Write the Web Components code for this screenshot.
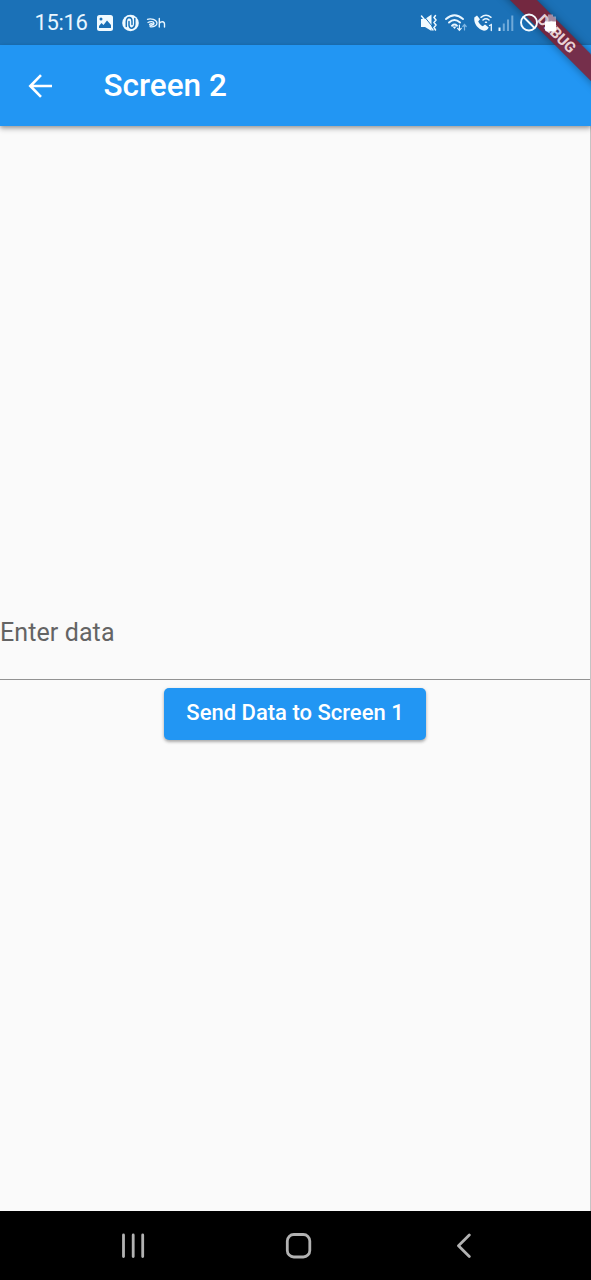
<!DOCTYPE html>
<html lang="en">
<head>
<meta charset="utf-8">
<title>Screen 2</title>
<style>
html,body{margin:0;height:100%;overflow:hidden}
</style>
</head>
<body>
<phone-screen></phone-screen>
<script>
const define = (name, markup) => {
  const t = document.createElement('template');
  t.innerHTML = markup;
  customElements.define(name, class extends HTMLElement {
    constructor() {
      super();
      this.attachShadow({mode: 'open'}).append(t.content.cloneNode(true));
    }
  });
};

define('status-bar', `
<style>
:host{display:flex;align-items:center;height:45px;flex:none;color:#e9f6ff;position:relative;z-index:6}
.time{font-size:22px;letter-spacing:-.35px;line-height:45px;margin-left:34.500px;width:61.500px;white-space:nowrap}
svg{display:block}
.right{margin-left:auto}
</style>
<span class="time">15:16</span>
<svg width="76" height="45" viewBox="96 0 76 45" fill="none">
  <path fill="#f0faff" fill-rule="evenodd" d="M99.500 15H110.500Q113 15 113 17.500V28.500Q113 31 110.500 31H99.500Q97 31 97 28.500V17.500Q97 15 99.500 15ZM99 28H111V25L107 20.500L103.500 25L101.500 23L99 26ZM101 17.500A1.500 1.500 0 1 0 101 20.500A1.500 1.500 0 1 0 101 17.500Z"/>
  <circle cx="130.500" cy="23" r="8.300" fill="#f0faff"/>
  <path stroke="#1b71b7" stroke-width="1.500" stroke-linecap="round" d="M126.300 26.500V21.500Q126.500 17.500 129.300 17.500Q132 17.700 132 21V24.500M129 21.500V25.300Q129.300 28.500 132 28.300Q134.800 27.500 134.800 24V18.500"/>
  <path stroke="#e9f6ff" stroke-width="1.300" stroke-linecap="round" stroke-linejoin="round" d="M147.500 19.300C151 18.200 156.500 19.500 157 23C157.200 26 153 27.300 150 26.700M148 22.500C150.500 21 154 21.500 154 23.500C153.500 25.500 149.500 25.800 149.500 24.600C149.800 23.500 152 23.300 153.500 24.500"/>
  <path stroke="#e9f6ff" stroke-width="1.400" stroke-linecap="round" d="M159.300 18.500V27M159.300 23.500Q160.500 21.600 162.500 21.700Q164.500 21.900 164.500 24V27"/>
</svg>
<svg class="right" width="176" height="45" viewBox="415 0 176 45" fill="none" stroke-linecap="round">
  <path fill="#f0faff" d="M421 19H425L431.500 14.500V31L425 27H421Z"/>
  <path stroke="#1b71b7" stroke-width="1" d="M423 15L434 28.500"/>
  <path stroke="#f0faff" stroke-width="1.500" d="M421.500 16L433 30M435.500 15.500L434 17.500L436 20L434 22.500L436 25L434 27.500L435.500 30"/>
  <path stroke="#e9f6ff" stroke-width="1.900" d="M446 19Q454.500 11.300 463 19M449 22.500Q454.500 17.500 460 22.500M452 25.700Q454.500 23.500 457 25.700"/>
  <path fill="#e9f6ff" d="M452.500 26.500H456.500L454.500 29Z"/>
  <path stroke="#e9f6ff" stroke-width="1.200" d="M459.400 25V30M457.600 28.300L459.400 30.300L461.200 28.300"/>
  <path stroke="#80b7e3" stroke-width="1.200" d="M464.500 30V25M462.800 26.500L464.500 24.500L466.200 26.500"/>
  <path fill="#f0faff" d="M474.300 17.500L477 15.500L480 19.200L478.200 21.500C479.200 23.800 480.800 25.300 482.800 26.200L485 24.500L488.700 27.500Q487 30.700 484 30.700C478 29.500 473.500 23.500 474.300 17.500Z"/>
  <path stroke="#e9f6ff" stroke-width="1.500" d="M481 17.300Q486 13.300 491 17.300M483 20Q486 17.500 489 20M485.500 22.300H486.500"/>
  <path stroke="#e9f6ff" stroke-width="1.300" d="M489.500 25.500L491.300 24.500V30.500"/>
  <path stroke-linecap="butt" stroke="#eef9ff" stroke-width="2" d="M499.500 27.500V31"/>
  <path stroke-linecap="butt" stroke="#6fa9d8" stroke-width="2" d="M503.800 23.500V31M508 19.500V31M512.300 15.500V31"/>
  <circle cx="529" cy="22.500" r="8" stroke="#f5fbff" stroke-width="1.900"/>
  <path stroke="#f5fbff" stroke-width="1.900" d="M523.500 17L534.500 28"/>
  <path fill="#bdbdd2" fill-opacity=".65" d="M548 14.500H553V16.500H556V22H545V16.500H548Z"/>
  <path fill="#fff" d="M545 21.500H556V29.500Q556 31.500 554 31.500H547Q545 31.500 545 29.500Z"/>
</svg>`);

define('debug-ribbon', `
<style>
:host{position:absolute;right:0;top:0;width:100px;height:100px;overflow:hidden;z-index:5;pointer-events:none}
div{position:absolute;left:-34.500px;top:23.500px;width:200px;height:18.700px;line-height:20px;transform:rotate(45deg);background:rgba(136,24,38,.82);box-shadow:0 0 9px rgba(0,0,0,.4);text-align:center;font-size:15px;letter-spacing:-.2px;font-weight:800;color:rgba(255,240,240,.85)}
</style>
<div><slot></slot></div>`);

define('app-bar', `
<style>
:host{display:flex;align-items:center;height:81px;flex:none;background:#2296f3;color:#fff;position:relative;z-index:2;box-shadow:0 3px 5px rgba(0,0,0,.28),0 1px 3px rgba(0,0,0,.15)}
svg{margin-left:20px;flex:none}
h1{margin:1px 0 0 43.500px;font-size:31.500px;font-weight:500;line-height:38px;white-space:nowrap}
</style>
<svg width="40" height="40" viewBox="20 65.500 40 40" fill="none" stroke="#fff" stroke-width="2.600"><path d="M52 85.500H31M41 74.700L30.300 85.500L41 96.300"/></svg>
<h1><slot></slot></h1>`);

define('text-input', `
<style>
:host{display:block;height:93px;box-sizing:border-box;padding-top:30px;border-bottom:1px solid #929292;font-size:25px;letter-spacing:.1px;line-height:32px;color:#646464}
</style>
<slot></slot>`);

define('raised-button', `
<style>
:host{display:flex;align-items:center;justify-content:center;width:262px;height:52px;box-sizing:border-box;margin:7.500px auto 0;border-radius:5px;background:#2296f3;color:#fff;font-size:22px;font-weight:500;line-height:26px;padding-bottom:1px;box-shadow:0 2px 3px rgba(0,0,0,.25),0 1px 4px rgba(0,0,0,.12);white-space:nowrap}
</style>
<slot></slot>`);

define('nav-bar', `
<style>
:host{display:flex;height:69px;flex:none;background:#000}
svg{display:block}
</style>
<svg width="591" height="69" viewBox="0 1211 591 69" fill="none" stroke="#b2b2b2" stroke-width="2.800" stroke-linecap="round" stroke-linejoin="round">
<path d="M123.500 1235V1256.500M133.200 1235V1256.500M142.700 1235V1256.500M469.300 1235L458.500 1245.700L469.300 1256.500"/>
<rect x="287.300" y="1234.500" width="22.500" height="22.500" rx="6.500"/>
</svg>`);

define('phone-screen', `
<style>
:host{display:flex;flex-direction:column;position:relative;width:591px;height:1280px;background:linear-gradient(#1b71b7 45px,#fafafa 45px);font-family:Roboto,sans-serif;overflow:hidden}
main{flex:1;box-sizing:border-box;padding-top:461px;border-right:1px solid #c4c4c4}
</style>
<status-bar></status-bar>
<app-bar>Screen 2</app-bar>
<main>
<text-input>Enter data</text-input>
<raised-button>Send Data to Screen 1</raised-button>
</main>
<nav-bar></nav-bar>
<debug-ribbon>DEBUG</debug-ribbon>`);
</script>
</body>
</html>
